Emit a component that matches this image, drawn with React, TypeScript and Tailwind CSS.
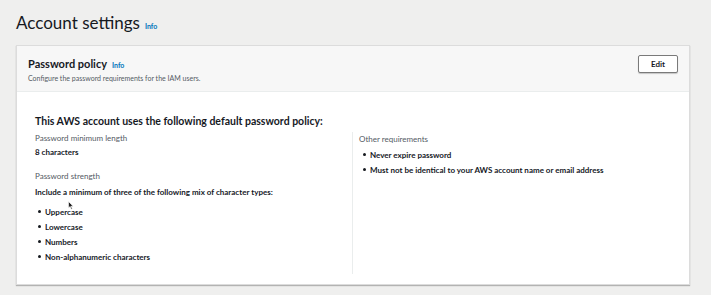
import { useState } from "react";

const strengthTypes = ["Uppercase", "Lowercase", "Numbers", "Non-alphanumeric characters"];
const otherReqs = [
  "Never expire password",
  "Must not be identical to your AWS account name or email address",
];

const Info = () => (
  <span className="ml-[5px] text-[7px] font-bold text-[#0073bb]">Info</span>
);

const Bullet = ({ children }: { children: React.ReactNode }) => (
  <li className="flex items-center h-[15px] text-[8px] font-bold text-[#16191f]">
    <span className="w-[3px] h-[3px] rounded-full bg-[#16191f] mr-[4px]" />
    <span>{children}</span>
  </li>
);

const App = () => {
  const [editing, setEditing] = useState(false);

  return (
    <div
      className="relative w-[711px] h-[295px] bg-[#efefee] px-[16px] pt-[9px] overflow-hidden"
      style={{ fontFamily: 'Lato, "Noto Sans", sans-serif' }}
    >
      <h1 className="flex items-baseline h-[28px] text-[17px] leading-[28px] text-[#16191f]">
        Account settings
        <Info />
      </h1>

      <section className="mt-[8px] w-[674px] bg-white border border-[#dcdcdc] shadow-[0_1px_1px_rgba(0,0,0,0.25)]">
        {/* Header */}
        <div className="flex items-start justify-between h-[46px] bg-[#f7f7f7] border-b border-[#eaeded] pl-[11px] pr-[11px] pt-[10px]">
          <div>
            <div className="flex items-baseline text-[11px] leading-[15px] font-bold text-[#16191f]">
              Password policy
              <Info />
            </div>
            <p className="mt-[1px] text-[7px] leading-[9px] text-[#545b64]">
              Configure the password requirements for the IAM users.
            </p>
          </div>
          <button
            onClick={() => setEditing(!editing)}
            className="w-[40px] h-[18px] mt-[-1px] border border-[#7a7a7a] rounded-[2px] bg-white text-[8px] font-bold text-[#16191f] shadow-[0_1px_1px_rgba(0,0,0,0.2)]"
          >
            Edit
          </button>
        </div>

        {/* Body */}
        <div className="pl-[18px] pr-[18px] pt-[22px] pb-[10px]">
          <h2 className="text-[10.5px] leading-[14px] font-bold text-[#16191f]">
            This AWS account uses the following default password policy:
          </h2>
          <div className="flex mt-[4px]">
            <div className="w-[317px]">
              <div className="text-[8px] leading-[10px] text-[#545b64] mt-[1px]">
                Password minimum length
              </div>
              <div className="text-[8px] leading-[11px] font-bold text-[#16191f] mt-[4px]">
                8 characters
              </div>
              <div className="text-[8px] leading-[10px] text-[#545b64] mt-[13px]">
                Password strength
              </div>
              <div className="text-[8px] leading-[11px] font-bold text-[#16191f] mt-[6px]">
                Include a minimum of three of the following mix of character types:
              </div>
              <ul className="mt-[6px] pl-[3px]">
                {strengthTypes.map((t) => (
                  <Bullet key={t}>{t}</Bullet>
                ))}
              </ul>
            </div>
            <div className="border-l border-[#eaeded] pl-[6px] pt-[2px] flex-1 h-[142px]">
              <div className="text-[8px] leading-[10px] text-[#545b64]">
                Other requirements
              </div>
              <ul className="mt-[3px] pl-[4px]">
                {otherReqs.map((t) => (
                  <Bullet key={t}>{t}</Bullet>
                ))}
              </ul>
            </div>
          </div>
        </div>
      </section>

      {/* mouse cursor */}
      <svg className="absolute left-[68px] top-[201px]" width="6" height="9" viewBox="0 0 6 9">
        <path d="M0.5 0.5 L0.5 7 L2 5.5 L3.3 8.3 L4.3 7.8 L3 5.2 L5.2 5.2 Z" fill="#222" stroke="#fff" strokeWidth="0.6" />
      </svg>
    </div>
  );
};

export default App;
